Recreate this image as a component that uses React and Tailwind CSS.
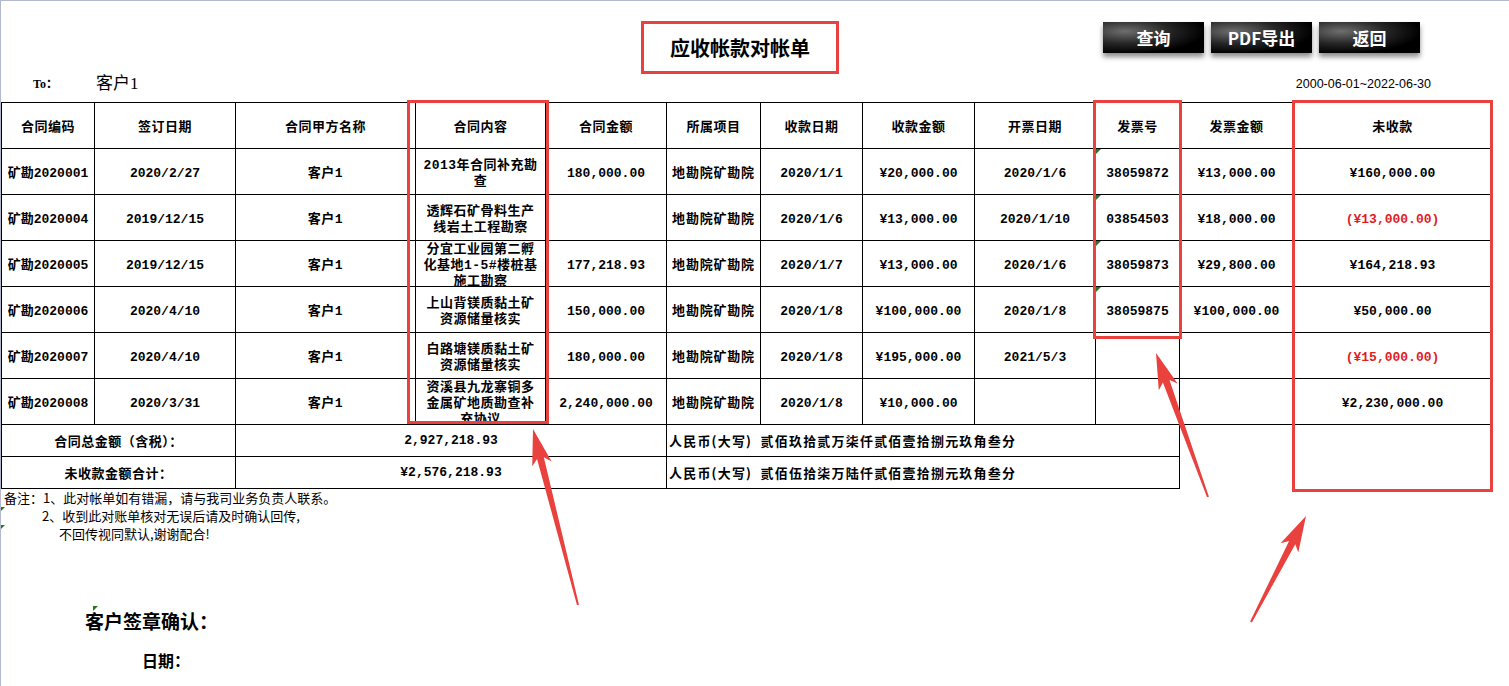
import React from "react";

const rows = [
	{ code: "矿勘2020001", date: "2020/2/27", content: ["2013年合同补充勘", "查"], amount: "180,000.00", recvDate: "2020/1/1", recvAmt: "¥20,000.00", invDate: "2020/1/6", invNo: "38059872", invAmt: "¥13,000.00", unpaid: "¥160,000.00" },
	{ code: "矿勘2020004", date: "2019/12/15", content: ["透辉石矿骨料生产", "线岩土工程勘察"], amount: "", recvDate: "2020/1/6", recvAmt: "¥13,000.00", invDate: "2020/1/10", invNo: "03854503", invAmt: "¥18,000.00", unpaid: "(¥13,000.00)", neg: true },
	{ code: "矿勘2020005", date: "2019/12/15", content: ["分宜工业园第二孵", "化基地1-5#楼桩基", "施工勘察"], amount: "177,218.93", recvDate: "2020/1/7", recvAmt: "¥13,000.00", invDate: "2020/1/6", invNo: "38059873", invAmt: "¥29,800.00", unpaid: "¥164,218.93" },
	{ code: "矿勘2020006", date: "2020/4/10", content: ["上山背镁质黏土矿", "资源储量核实"], amount: "150,000.00", recvDate: "2020/1/8", recvAmt: "¥100,000.00", invDate: "2020/1/8", invNo: "38059875", invAmt: "¥100,000.00", unpaid: "¥50,000.00" },
	{ code: "矿勘2020007", date: "2020/4/10", content: ["白路塘镁质黏土矿", "资源储量核实"], amount: "180,000.00", recvDate: "2020/1/8", recvAmt: "¥195,000.00", invDate: "2021/5/3", invNo: "", invAmt: "", unpaid: "(¥15,000.00)", neg: true },
	{ code: "矿勘2020008", date: "2020/3/31", content: ["资溪县九龙寨铜多", "金属矿地质勘查补", "充协议"], amount: "2,240,000.00", recvDate: "2020/1/8", recvAmt: "¥10,000.00", invDate: "", invNo: "", invAmt: "", unpaid: "¥2,230,000.00" },
];

const headers = ["合同编码", "签订日期", "合同甲方名称", "合同内容", "合同金额", "所属项目", "收款日期", "收款金额", "开票日期", "发票号", "发票金额", "未收款"];
const widths = ["w-[93px]", "w-[141px]", "w-[180px]", "w-[130px]", "w-[121px]", "w-[94px]", "w-[102px]", "w-[112px]", "w-[121px]", "w-[84px]", "w-[114px]", "w-[198px]"];

// excel "number stored as text" marker
const Tri = ({ className = "" }) => (
	<span className={`absolute w-0 h-0 border-t-[5px] border-r-[5px] border-t-[#1f7a1f] border-r-transparent ${className}`} />
);

const arrowPoints = (sx, sy, tx, ty) => {
	const dx = tx - sx;
	const dy = ty - sy;
	const len = Math.hypot(dx, dy);
	const ux = dx / len;
	const uy = dy / len;
	const nx = -uy;
	const ny = ux;
	const L = 30;
	const hx = tx - ux * L;
	const hy = ty - uy * L;
	const bx = tx - ux * (L + 6);
	const by = ty - uy * (L + 6);
	const pts = [
		[sx + nx * 1, sy + ny * 1],
		[hx + nx * 3.5, hy + ny * 3.5],
		[bx + nx * 10, by + ny * 10],
		[tx, ty],
		[bx - nx * 10, by - ny * 10],
		[hx - nx * 3.5, hy - ny * 3.5],
		[sx - nx * 1, sy - ny * 1],
	];
	return pts.map((p) => p.join(",")).join(" ");
};

const Button = ({ children }) => (
	<button className="w-[101px] h-[31px] text-white text-[17px] font-bold font-['Noto_Sans_CJK_SC',sans-serif] leading-none bg-[radial-gradient(ellipse_at_22%_30%,#6e6e6e_0%,#262626_40%,#000_72%)] shadow-[0_4px_5px_rgba(0,0,0,0.45)]">
		{children}
	</button>
);

const cell = "border border-black text-center align-middle p-0";
const dcell = `${cell} pt-[4px]`;

export default function App() {
	return (
		<div className="relative w-[1509px] h-[686px] overflow-hidden bg-white border-t border-l border-[#b3b8cc] text-black">
			{/* header */}
			<div className="flex h-[73px]">
				<div className="ml-[640px] mt-[20px] w-[198px] h-[53px] border-[3px] border-[#e8413e] flex items-center justify-center text-[20px] font-bold font-['Noto_Sans_CJK_SC',serif]">
					应收帐款对帐单
				</div>
				<div className="ml-[264px] mt-[21px] flex gap-[7px] h-[31px]">
					<Button>查询</Button>
					<Button>PDF导出</Button>
					<Button>返回</Button>
				</div>
			</div>
			<div className="flex items-center h-[28px] pb-[8px]">
				<span className="ml-[32px] text-[12px] font-bold font-['Liberation_Serif','Noto_Sans_CJK_SC',serif]">To：</span>
				<span className="ml-[38px] text-[17px] font-['Liberation_Serif','Noto_Sans_CJK_SC',serif]">客户1</span>
				<span className="ml-auto mr-[78px] text-[12.5px] font-['Liberation_Sans',sans-serif]">2000-06-01~2022-06-30</span>
			</div>

			{/* table */}
			<table className="table-fixed border-collapse w-[1491px] text-[13px] font-bold font-['Liberation_Mono','Noto_Sans_CJK_SC',monospace]">
				<colgroup>
					{widths.map((w, i) => (
						<col key={i} className={w} />
					))}
				</colgroup>
				<thead>
					<tr className="h-[46px]">
						{headers.map((h) => (
							<th key={h} className={`${cell} font-bold tracking-[0.5px] font-['Noto_Sans_CJK_SC',sans-serif]`}>
								{h}
							</th>
						))}
					</tr>
				</thead>
				<tbody>
					{rows.map((r, i) => (
						<tr key={r.code} className="h-[46px]">
							<td className={dcell}>{r.code}</td>
							<td className={dcell}>{r.date}</td>
							<td className={`${dcell} tracking-[0.5px]`}>客户1</td>
							<td className={cell}>
								<div className="h-[45px] pt-[4px] overflow-hidden flex flex-col justify-center leading-[16px] tracking-[0.5px]">
									{r.content.map((l) => (
										<div key={l} className="whitespace-nowrap">{l}</div>
									))}
								</div>
							</td>
							<td className={dcell}>{r.amount}</td>
							<td className={`${dcell} tracking-[0.8px]`}>地勘院矿勘院</td>
							<td className={dcell}>{r.recvDate}</td>
							<td className={dcell}>{r.recvAmt}</td>
							<td className={dcell}>{r.invDate}</td>
							<td className={`${dcell} relative`}>
								{i < 4 && <Tri className="left-0 top-0" />}
								{r.invNo}
							</td>
							<td className={dcell}>{r.invAmt}</td>
							<td className={`${dcell} ${r.neg ? "text-[#e0201c]" : ""}`}>{r.unpaid}</td>
						</tr>
					))}
					<tr className="h-[32px]">
						<td colSpan={2} className={`${cell} tracking-[0.5px] font-['Noto_Sans_CJK_SC',sans-serif]`}>合同总金额（含税）：</td>
						<td colSpan={3} className={cell}>2,927,218.93</td>
						<td colSpan={5} className={`${cell} text-left pl-[2px] font-['Noto_Sans_CJK_SC',sans-serif] tracking-[1.2px]`}>
							人民币(大写)&nbsp; 贰佰玖拾贰万柒仟贰佰壹拾捌元玖角叁分
						</td>
						<td rowSpan={2} className={`${cell} border-b-0`}></td>
						<td rowSpan={2} className={`${cell} border-b-0`}></td>
					</tr>
					<tr className="h-[32px]">
						<td colSpan={2} className={`${cell} tracking-[0.5px] font-['Noto_Sans_CJK_SC',sans-serif]`}>未收款金额合计：</td>
						<td colSpan={3} className={cell}>¥2,576,218.93</td>
						<td colSpan={5} className={`${cell} text-left pl-[2px] font-['Noto_Sans_CJK_SC',sans-serif] tracking-[1.2px]`}>
							人民币(大写)&nbsp; 贰佰伍拾柒万陆仟贰佰壹拾捌元玖角叁分
						</td>
					</tr>
				</tbody>
			</table>

			{/* remarks */}
			<div className="text-[13px] leading-[18px] font-['Noto_Sans_CJK_SC',sans-serif]">
				<div className="pl-[3px]">备注：1、此对帐单如有错漏，请与我司业务负责人联系。</div>
				<div className="relative pl-[41px]">
					<Tri className="-left-px top-0" />
					2、收到此对账单核对无误后请及时确认回传,
				</div>
				<div className="relative pl-[58px]">
					<Tri className="-left-px top-0" />
					不回传视同默认,谢谢配合!
				</div>
			</div>

			{/* signature */}
			<div className="mt-[65px] pl-[84px] font-bold font-['Noto_Sans_CJK_SC',serif]">
				<div className="relative text-[19px] leading-[26px]">
					<Tri className="left-[8px] -top-[2px]" />
					客户签章确认：
				</div>
				<div className="mt-[15px] pl-[57px] text-[16px] leading-[22px]">日期：</div>
			</div>

			{/* annotations */}
			<svg className="absolute left-[-1px] top-[-1px] pointer-events-none" width="1509" height="686" viewBox="0 0 1509 686">
				<g fill="none" stroke="#e8413e" strokeWidth="3">
					<rect x="408.5" y="101.5" width="139" height="321" />
					<rect x="1094.5" y="101.5" width="86" height="236" />
					<rect x="1293.5" y="101.5" width="198" height="389" />
				</g>
				<g fill="#e8413e">
					<polygon points={arrowPoints(578, 605, 533, 429)} />
					<polygon points={arrowPoints(1208, 497, 1156, 353)} />
					<polygon points={arrowPoints(1251, 622, 1306, 516)} />
				</g>
			</svg>
		</div>
	);
}
